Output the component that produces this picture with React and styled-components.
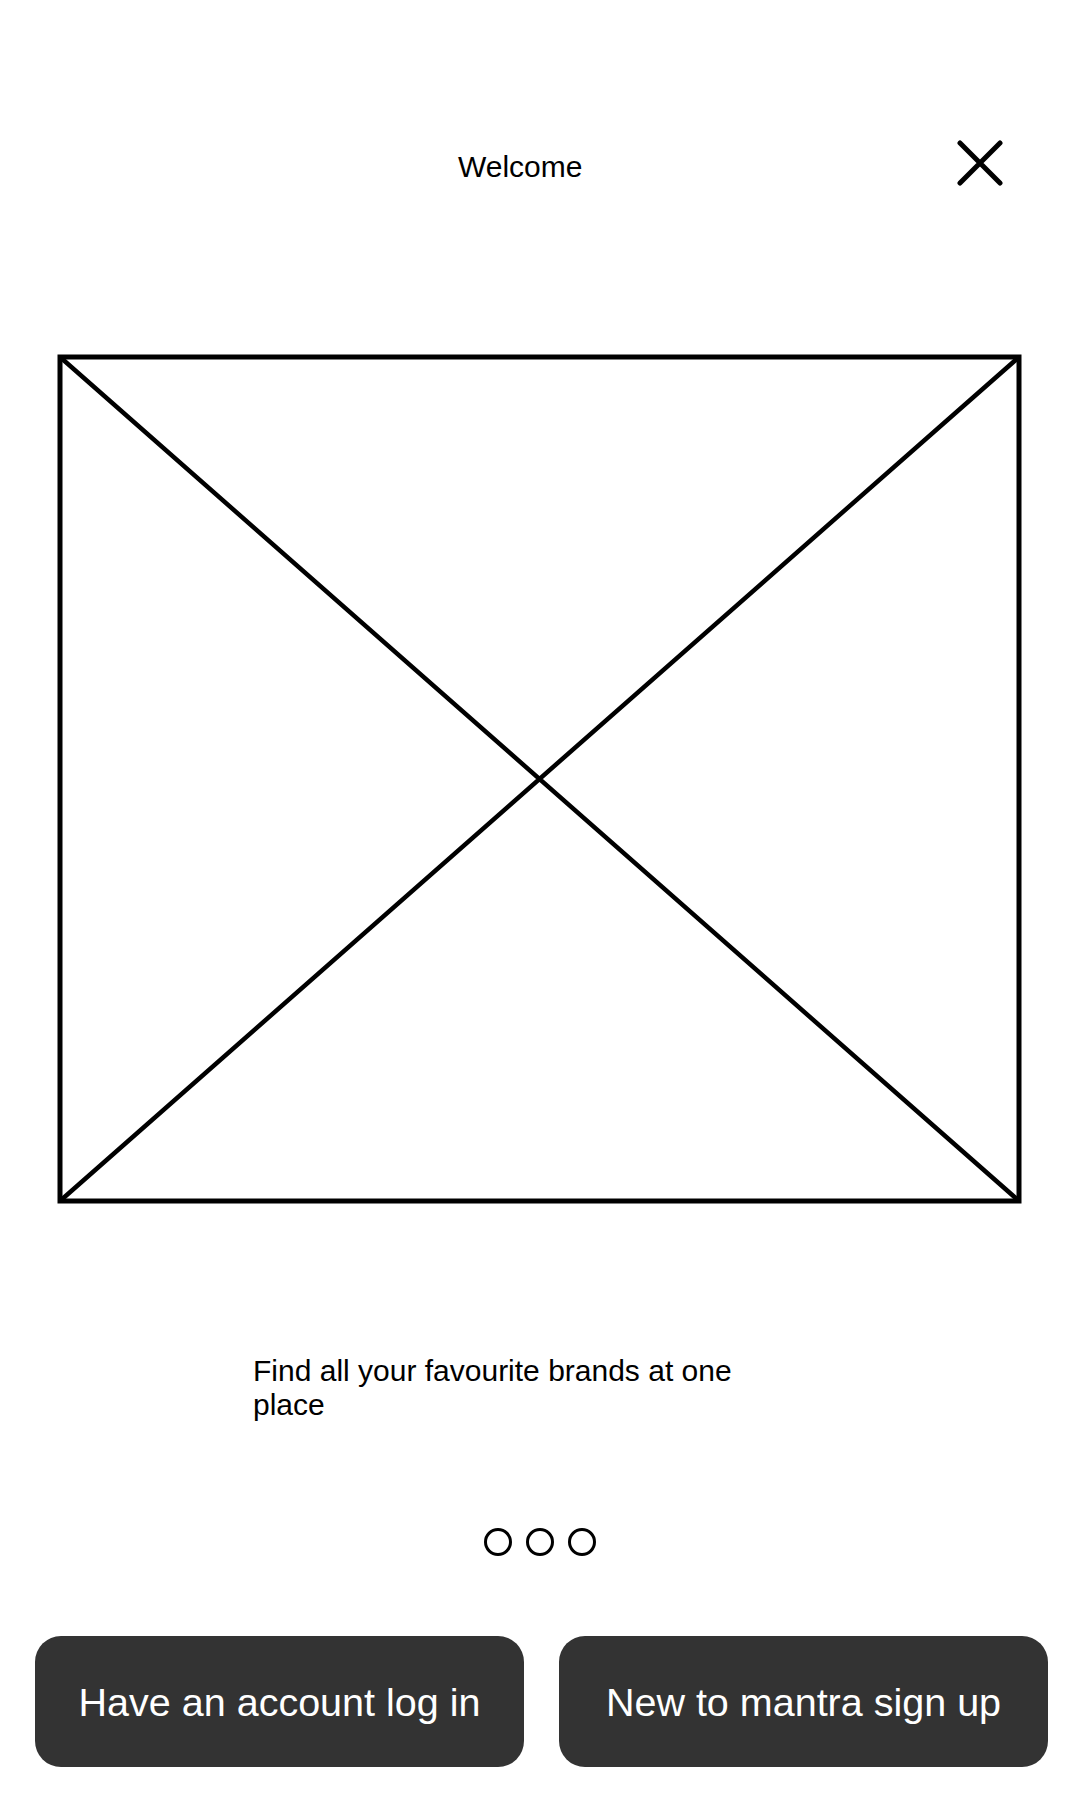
import React from 'react';
import styled, {createGlobalStyle} from "styled-components";

const GlobalStyle = createGlobalStyle`
  body {
    margin: 0;
    background: #fff;
    font-family: "Liberation Sans", Arial, sans-serif;
  }
`

const Page = styled.div`
  width: 1080px;
  min-height: 1800px;
  display: flex;
  flex-direction: column;
  background: #fff;
`
const Header = styled.div`
  display: flex;
  align-items: center;
  height: 46px;
  margin-top: 140px;
  padding: 0 77px 0 458px;
`
const Title = styled.h1`
  margin: 0;
  padding-top: 8px;
  font-size: 30px;
  font-weight: 400;
  line-height: 40px;
  color: #000;
`
const CloseBtn = styled.button`
  margin-left: auto;
  width: 46px;
  height: 46px;
  padding: 0;
  border: 0;
  background: none;
  cursor: pointer;
  & > svg {
    display: block;
  }
`
const Frame = styled.div`
  margin: 168px 0 0 57px;
  width: 965px;
  height: 850px;
  & > svg {
    display: block;
  }
`
const Caption = styled.p`
  margin: 150px 0 0 253px;
  width: 520px;
  font-size: 30px;
  line-height: 34px;
  color: #000;
`
const Dots = styled.div`
  display: flex;
  justify-content: center;
  gap: 14px;
  margin-top: 106px;
`
const Dot = styled.span`
  box-sizing: border-box;
  width: 28px;
  height: 28px;
  border: 3px solid #000;
  border-radius: 50%;
  background: ${props => props.active ? "#000" : "transparent"};
`
const ButtonRow = styled.div`
  display: flex;
  gap: 35px;
  margin-top: 80px;
  padding: 0 32px 0 35px;
`
const ActionBtn = styled.button`
  flex: 1;
  height: 131px;
  border: 0;
  border-radius: 26px;
  background: #333333;
  color: #fff;
  font-family: "Liberation Sans", Arial, sans-serif;
  font-size: 39.5px;
  padding: 2px 0 0;
  cursor: pointer;
`

const CloseIcon = () => (
    <svg width="46" height="46" viewBox="0 0 46 46">
        <path d="M3 3 L43 43 M43 3 L3 43" stroke="#000" strokeWidth="5" strokeLinecap="round"/>
    </svg>
)

const Placeholder = () => (
    <svg width="965" height="850" viewBox="0 0 965 850">
        <rect x="3" y="3" width="959" height="844" fill="none" stroke="#000" strokeWidth="5"/>
        <path d="M3 3 L962 847 M962 3 L3 847" stroke="#000" strokeWidth="4.5"/>
    </svg>
)

const App = () => {
    const dots = [0, 1, 2];
    return (
        <Page>
            <GlobalStyle/>
            <Header>
                <Title>Welcome</Title>
                <CloseBtn aria-label="close"><CloseIcon/></CloseBtn>
            </Header>
            <Frame><Placeholder/></Frame>
            <Caption>Find all your favourite brands at one place</Caption>
            <Dots>
                {dots.map(idx => <Dot key={idx}/>)}
            </Dots>
            <ButtonRow>
                <ActionBtn>Have an account log in</ActionBtn>
                <ActionBtn>New to mantra sign up</ActionBtn>
            </ButtonRow>
        </Page>
    );
};

export default App;
